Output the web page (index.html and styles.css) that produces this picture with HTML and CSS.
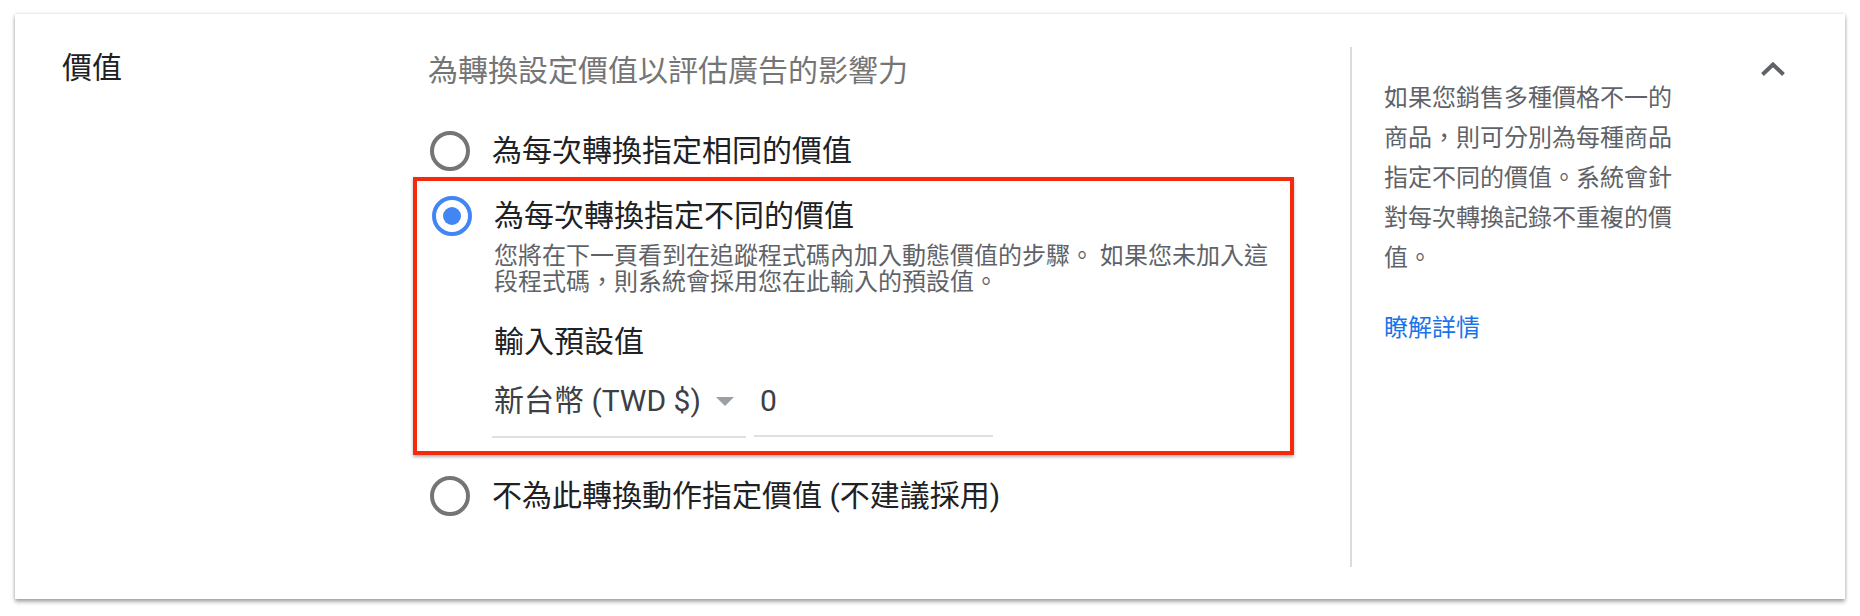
FILE: index.html
```html
<!DOCTYPE html>
<html lang="zh-Hant">
<head>
<meta charset="utf-8">
<title>價值</title>
<link rel="stylesheet" href="styles.css">
</head>
<body>
<div class="card">
  <div class="title">價值</div>
  <div class="main">
    <div class="subtitle">為轉換設定價值以評估廣告的影響力</div>
    <div class="option first">
      <span class="radio"></span>
      <span class="label">為每次轉換指定相同的價值</span>
    </div>
    <div class="highlight">
      <div class="option">
        <span class="radio checked"></span>
        <span class="label">為每次轉換指定不同的價值</span>
      </div>
      <div class="details">
        <p class="desc">您將在下一頁看到在追蹤程式碼內加入動態價值的步驟。 如果您未加入這段程式碼，則系統會採用您在此輸入的預設值。</p>
        <div class="default-label">輸入預設值</div>
        <div class="fields">
          <div class="select"><span class="select-text">新台幣 (TWD $)</span><span class="caret"></span></div>
          <div class="input">0</div>
        </div>
      </div>
    </div>
    <div class="option last">
      <span class="radio"></span>
      <span class="label">不為此轉換動作指定價值 (不建議採用)</span>
    </div>
  </div>
  <div class="aside">
    <div class="help">
      <p class="help-text">如果您銷售多種價格不一的商品，則可分別為每種商品指定不同的價值。系統會針對每次轉換記錄不重複的價值。</p>
      <a class="help-link" href="#">瞭解詳情</a>
    </div>
    <div class="toggle">
      <svg width="24" height="14" viewBox="0 0 24 14" aria-hidden="true"><polyline points="1.5,12.5 12,2.5 22.5,12.5" fill="none" stroke="#5f6368" stroke-width="4"/></svg>
    </div>
  </div>
</div>
</body>
</html>
```
FILE: styles.css
```css
* { box-sizing: border-box; }
html, body { margin: 0; padding: 0; background: #ffffff; }
body {
  min-height: 616px;
  padding: 14px 15px 17px 15px;
  font-family: Roboto, "Noto Sans CJK TC", sans-serif;
  color: #202124;
}
.card {
  display: flex;
  height: 585px;
  background: #fff;
  box-shadow: 0 3px 4px rgba(0,0,0,0.32), 0 0 3px rgba(0,0,0,0.16);
}
.title {
  width: 413px;
  flex: none;
  padding: 34px 0 0 47px;
  font-size: 30px;
  line-height: 40px;
  color: #202124;
}
.main {
  width: 922px;
  flex: none;
  padding-top: 37px;
}
.subtitle {
  font-size: 30px;
  line-height: 40px;
  color: #757575;
}
.option {
  display: flex;
  align-items: center;
  gap: 22px;
  margin-left: 2px;
}
.option.first { margin-top: 40px; }
.option.last { margin-top: 21px; }
.radio {
  flex: none;
  width: 40px;
  height: 40px;
  border: 4px solid #757575;
  border-radius: 50%;
  display: flex;
  align-items: center;
  justify-content: center;
}
.radio.checked { border-color: #4285f4; }
.radio.checked::after {
  content: "";
  width: 18px;
  height: 18px;
  border-radius: 50%;
  background: #4285f4;
}
.label {
  font-size: 30px;
  line-height: 40px;
  color: #202124;
}
.highlight {
  width: 881px;
  margin: 6px 0 0 -15px;
  padding: 15px 0 13px 13px;
  border: 4px solid #f5290c;
  box-shadow: 0 2px 3px rgba(0,0,0,0.3);
}
.details { margin-left: 64px; }
.desc {
  margin: 7px 0 0 0;
  width: 790px;
  font-size: 24px;
  line-height: 26px;
  color: #5f6368;
}
.default-label {
  margin-top: 27px;
  font-size: 30px;
  line-height: 40px;
  color: #202124;
}
.fields {
  display: flex;
  align-items: flex-start;
  gap: 8px;
  margin-top: 19px;
  margin-left: -2px;
}
.select {
  width: 254px;
  display: flex;
  align-items: center;
  padding: 0 0 15px 2px;
  border-bottom: 2px solid #e0e0e0;
}
.select-text {
  font-size: 30px;
  line-height: 40px;
  color: #3c4043;
  white-space: nowrap;
}
.caret {
  margin-left: 15px;
  width: 0;
  height: 0;
  border-left: 9px solid transparent;
  border-right: 9px solid transparent;
  border-top: 9px solid #9aa0a6;
}
.input {
  width: 239px;
  padding: 0 0 14px 6px;
  font-size: 30px;
  line-height: 40px;
  color: #3c4043;
  border-bottom: 2px solid #e0e0e0;
}
.aside {
  flex: 1;
  display: flex;
  align-items: flex-start;
  margin: 33px 0 32px 0;
  border-left: 2px solid #dadce0;
  padding-left: 32px;
}
.help {
  width: 292px;
  padding-top: 31px;
}
.help-text {
  margin: 0;
  font-size: 24px;
  line-height: 40px;
  color: #5f6368;
}
.help-link {
  display: block;
  margin-top: 30px;
  font-size: 24px;
  line-height: 40px;
  color: #1a73e8;
  text-decoration: none;
}
.toggle {
  margin-left: auto;
  margin-right: 60px;
  margin-top: 15px;
  line-height: 0;
}
```
